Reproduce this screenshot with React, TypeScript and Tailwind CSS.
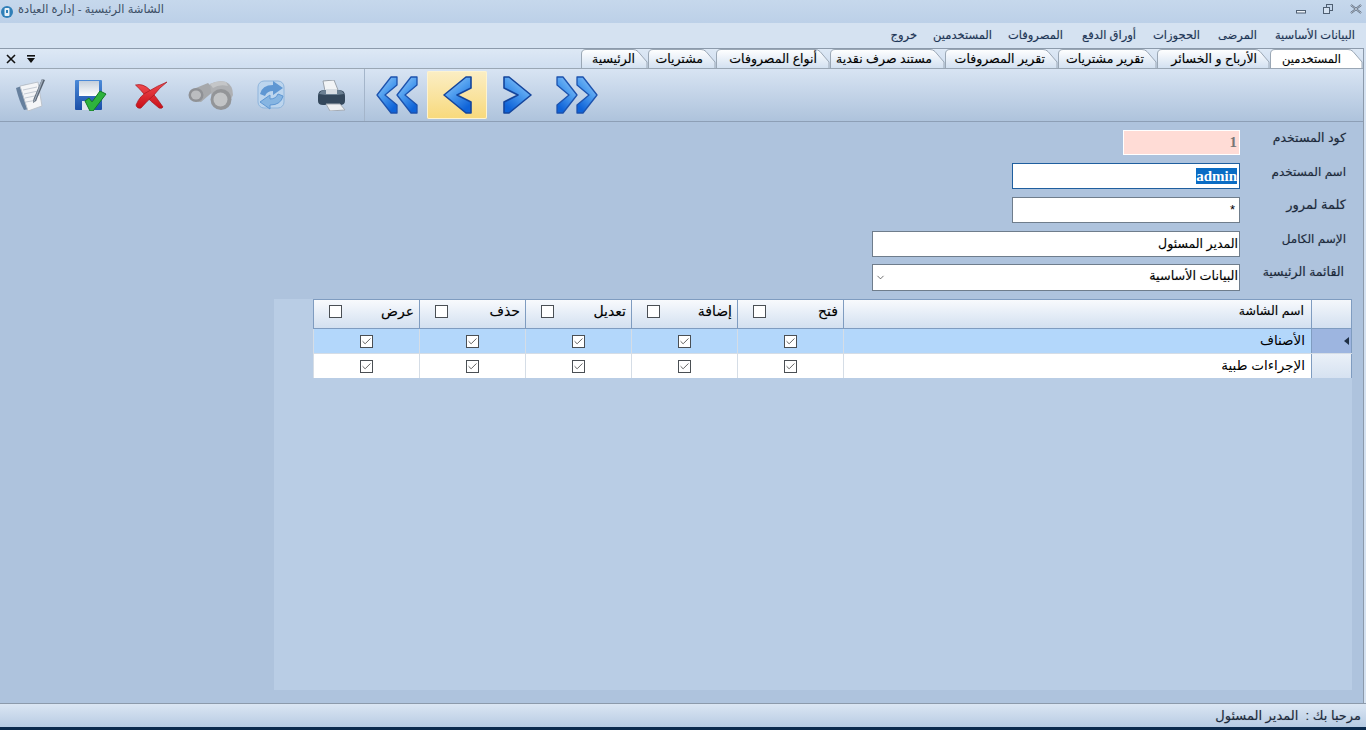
import { Check, ChevronDown } from 'lucide-react';

const FONT = "font-['Liberation_Sans','DejaVu_Sans','Noto_Sans',sans-serif]";
const HEAVY = '[text-shadow:0_0_1px_rgba(0,0,0,0.25)]';

const MENU = [
  { label: 'البيانات الأساسية', w: 'w-[98px]' },
  { label: 'المرضى', w: 'w-[57px]' },
  { label: 'الحجوزات', w: 'w-[64px]' },
  { label: 'أوراق الدفع', w: 'w-[73px]' },
  { label: 'المصروفات', w: 'w-[71px]' },
  { label: 'المستخدمين', w: 'w-[75px]' },
  { label: 'خروج', w: 'w-[40px]' },
];

const TABS = [
  { label: 'المستخدمين', w: 'w-[93px]', width: 93, active: true },
  { label: 'الأرباح و الخسائر', w: 'w-[113px]', width: 113 },
  { label: 'تقرير مشتريات', w: 'w-[99px]', width: 99 },
  { label: 'تقرير المصروفات', w: 'w-[113px]', width: 113 },
  { label: 'مستند صرف نقدية', w: 'w-[115px]', width: 115 },
  { label: 'أنواع المصروفات', w: 'w-[114px]', width: 114 },
  { label: 'مشتريات', w: 'w-[68px]', width: 68 },
  { label: 'الرئيسية', w: 'w-[67px]', width: 67 },
];

const COLUMNS = ['فتح', 'إضافة', 'تعديل', 'حذف', 'عرض'];
const ROWS = ['الأصناف', 'الإجراءات طبية'];
const GRID = 'grid w-fit grid-cols-[41px_468px_repeat(5,106px)]';

function Tab({ label, w, width, active }: { label: string; w: string; width: number; active?: boolean }) {
  const d = `M0.5 20 V6 Q0.5 1.5 5 1.5 H${width - 15} Q${width - 12} 1.5 ${width - 10} 3.5 L${width - 1} 14 V20`;
  return (
    <div className={`relative h-[20px] ${w} shrink-0`}>
      <svg className="absolute inset-0" width={width} height={20}>
        <defs>
          <linearGradient id={`tab-${width}`} x1="0" y1="0" x2="0" y2="1">
            <stop offset="0" stopColor="#ffffff" />
            <stop offset="1" stopColor={active ? '#ffffff' : '#d3e1f1'} />
          </linearGradient>
        </defs>
        <path d={d} fill={`url(#tab-${width})`} stroke="#9aa7b5" />
      </svg>
      <span className={`relative block pt-[2px] leading-[18px] text-black whitespace-nowrap ${HEAVY} ${active ? 'pr-[22px] text-[11.5px]' : 'pr-[13px] text-[12.5px]'}`}>{label}</span>
    </div>
  );
}

function Chevron({ flip, double, id }: { flip?: boolean; double?: boolean; id: string }) {
  const single = 'M22 0 H27 V11 L13 18 L27 25 V36 H22 L0 18 Z';
  const slim = 'M14 0 H20 V8 L8 18 L20 28 V36 H14 L0 18 Z';
  const w = double ? 40 : 27;
  return (
    <svg width={w + 2} height={38} viewBox={`-1 -1 ${w + 2} 38`}>
      <defs>
        <linearGradient id={id} x1="0" y1="0" x2="0.6" y2="1">
          <stop offset="0" stopColor="#a6d2fa" />
          <stop offset="0.5" stopColor="#4f9eef" />
          <stop offset="1" stopColor="#0f63d8" />
        </linearGradient>
      </defs>
      <g transform={flip ? `translate(${w} 0) scale(-1 1)` : undefined}>
        {double ? (
          <>
            <path d={slim} fill={`url(#${id})`} stroke="#1c52ad" strokeWidth="1.3" strokeLinejoin="round" />
            <path d={slim} transform="translate(20 0)" fill={`url(#${id})`} stroke="#1c52ad" strokeWidth="1.3" strokeLinejoin="round" />
          </>
        ) : (
          <path d={single} fill={`url(#${id})`} stroke="#14459c" strokeWidth="1.6" strokeLinejoin="round" />
        )}
      </g>
    </svg>
  );
}

function NotesIcon() {
  return (
    <svg width="30" height="32" viewBox="0 0 30 32">
      <path d="M0 9 L11 5 L18 29 L8 31 Q3 22 0 9 Z" fill="#66809e" />
      <path d="M4 7 L22 3 L26 27 L12 32 Z" fill="#f4f5f7" stroke="#bcc3cc" />
      <path d="M7 11 L21 8 M8 15 L22 12 M9 19 L23 16 M10 23 L21 21" stroke="#c6ccd5" />
      <path d="M26 0 L29 1 L20 22 L17 24 L17.5 20 Z" fill="#56616f" />
      <path d="M26 0 L27.5 0.5 L19 22 L17 24 Z" fill="#9ca8b7" />
    </svg>
  );
}

function SaveIcon() {
  return (
    <svg width="32" height="32" viewBox="0 0 32 32">
      <defs>
        <linearGradient id="floppy" x1="0" y1="0" x2="0" y2="1">
          <stop offset="0" stopColor="#4b8ad8" />
          <stop offset="1" stopColor="#1b4fa8" />
        </linearGradient>
        <linearGradient id="floppy-label" x1="0" y1="0" x2="0" y2="1">
          <stop offset="0" stopColor="#c4cfdc" />
          <stop offset="1" stopColor="#ffffff" />
        </linearGradient>
      </defs>
      <rect x="0" y="1" width="27" height="30" rx="1" fill="url(#floppy)" />
      <rect x="4" y="2" width="20" height="15" fill="url(#floppy-label)" />
      <rect x="7" y="22" width="12" height="9" fill="#dfe6ef" />
      <path d="M10 22 L14 19 L17 23 L25 12 L31 15 L18 32 L15 32 Z" fill="#2eb33c" stroke="#137a24" />
    </svg>
  );
}

function DeleteIcon() {
  return (
    <svg width="33" height="29" viewBox="0 0 33 29">
      <defs>
        <linearGradient id="cross" x1="0" y1="0" x2="0" y2="1">
          <stop offset="0" stopColor="#f04a4f" />
          <stop offset="1" stopColor="#c90f18" />
        </linearGradient>
      </defs>
      <path d="M0.5 4 Q8 2 15 9 Q22 17 28 26 Q27 28 24 27 Q15 20 9 13 Q5 8 0.5 4 Z" fill="url(#cross)" stroke="#a3161c" strokeWidth="0.7" />
      <path d="M1 24 Q5 14 14 10 Q22 5 32 1 Q24 7 19 14 Q12 20 6 27 Q2 28 1 24 Z" fill="url(#cross)" stroke="#a3161c" strokeWidth="0.7" />
    </svg>
  );
}

function BinocularsIcon() {
  return (
    <svg width="46" height="29" viewBox="0 0 46 29">
      <path d="M3 9 L20 2 L27 9 L13 21 L6 20 Z" fill="#a6a8ab" />
      <path d="M22 3 Q30 -1 38 1 Q45 4 45 14 L40 24 L24 18 Z" fill="#aeb0b3" />
      <path d="M22 3 Q30 -1 38 1 L40 5 Q31 3 25 7 Z" fill="#c4c6c8" />
      <ellipse cx="8" cy="14" rx="7.5" ry="7" fill="#8f9195" />
      <ellipse cx="8" cy="14" rx="5" ry="4.5" fill="#bbbdc0" />
      <circle cx="33" cy="18.5" r="10.5" fill="#939598" />
      <circle cx="32.5" cy="18.5" r="7" fill="#c2c4c6" />
    </svg>
  );
}

function RefreshIcon() {
  return (
    <svg width="29" height="30" viewBox="0 0 29 30">
      <rect x="1" y="1" width="26" height="27" rx="6" fill="#bcd5ee" stroke="#8fb5dc" />
      <path d="M3 14 Q5 5 16 5 L16 1 L26 8 L16 15 L16 11 Q10 11 8 16 Z" fill="#5f97d3" />
      <path d="M26 16 Q24 25 13 25 L13 29 L3 22 L13 15 L13 19 Q19 19 21 14 Z" fill="#86b5e2" stroke="#5f97d3" />
    </svg>
  );
}

function PrinterIcon() {
  return (
    <svg width="29" height="31" viewBox="0 0 29 31">
      <path d="M6 1 L17 0 L21 10 L8 11 Z" fill="#f2f4f6" stroke="#9aa2ab" />
      <path d="M1 16 Q1 10 7 10 L22 10 Q28 10 28 16 L28 21 Q28 25 23 25 L6 25 Q1 25 1 21 Z" fill="#34485c" />
      <path d="M2 14 Q4 10 8 10 L22 10 Q26 11 27 14 L20 15 H9 Z" fill="#6b8093" />
      <rect x="9" y="9" width="11" height="5" fill="#d7dde3" />
      <path d="M9 24 L23 24 L28 30 L13 31 Z" fill="#eef0f2" stroke="#a5acb4" />
    </svg>
  );
}

function ToolButton({ children, active }: { children: React.ReactNode; active?: boolean }) {
  return (
    <div className={`w-[60px] h-[48px] flex items-center justify-center rounded-[2px] ${active ? 'bg-gradient-to-b from-[#fbeec4] to-[#f8d97a] shadow-[inset_0_0_0_1px_#fdf3d0]' : ''}`}>
      {children}
    </div>
  );
}

function Box({ checked }: { checked?: boolean }) {
  return (
    <span className="w-[13px] h-[13px] bg-white border border-[#4a4f54] flex items-center justify-center shrink-0">
      {checked && <Check size={11} strokeWidth={2} className="text-[#555]" />}
    </span>
  );
}

export default function App() {
  return (
    <div className={`${FONT} w-full h-screen overflow-hidden flex flex-col bg-[#d5e2f1]`}>
      {/* title bar */}
      <div className="h-[23px] shrink-0 flex items-center justify-between bg-gradient-to-b from-[#c6d8ec] to-[#bcd0e8]">
        <div className="flex items-center gap-[5px] pl-[1px]">
          <svg width="12" height="14" viewBox="0 0 12 14">
            <circle cx="6" cy="7" r="6" fill="#2f7fb8" />
            <rect x="3.5" y="3" width="5" height="8" rx="1" fill="#e6f1f8" />
            <rect x="5" y="5" width="2" height="3" fill="#2f7fb8" />
          </svg>
          <span dir="rtl" className="text-[11.5px] text-[#3c4f66] leading-none pb-[3px]">الشاشة الرئيسية - إدارة العيادة</span>
        </div>
        <div className="flex items-center gap-[17px] pr-[4px] pb-[5px]">
          <svg width="10" height="10" viewBox="0 0 10 10"><rect x="0.5" y="6.5" width="9" height="2.5" fill="#eef3f9" stroke="#4f5f72" /></svg>
          <svg width="10" height="10" viewBox="0 0 10 10"><rect x="3.5" y="0.5" width="6" height="6" fill="none" stroke="#4f5f72" /><rect x="0.5" y="3.5" width="6" height="6" fill="#d5e2f1" stroke="#4f5f72" /></svg>
          <svg width="12" height="10" viewBox="0 0 12 10"><path d="M1 1 L11 9 M11 1 L1 9" stroke="#4f5f72" strokeWidth="2" /><path d="M1 1 L11 9 M11 1 L1 9" stroke="#e8eef6" strokeWidth="0.7" /></svg>
        </div>
      </div>

      {/* menu */}
      <div dir="rtl" className={`h-[25px] shrink-0 flex items-center pr-[11px] bg-[#d5e2f1] text-[11.5px] text-[#1c3558] ${HEAVY}`}>
        {MENU.map((m) => (
          <span key={m.label} className={`${m.w} whitespace-nowrap`}>{m.label}</span>
        ))}
      </div>

      {/* mdi frame */}
      <div className="flex-1 min-h-0 flex flex-col mr-[2px] border-r border-[#8c9aab]">
        <div dir="rtl" className="h-[20px] shrink-0 flex items-end border-t border-[#8c9aab] bg-gradient-to-b from-[#dde8f5] to-[#cfdef0]">
          <div className="flex -mt-px">
            {TABS.map((t) => (
              <Tab key={t.label} {...t} />
            ))}
          </div>
          <div className="mr-auto self-center flex items-center gap-[10px] pl-[6px] flex-row-reverse">
            <svg width="10" height="10" viewBox="0 0 10 10"><path d="M1 1 L9 9 M9 1 L1 9" stroke="#111" strokeWidth="1.6" /></svg>
            <svg width="10" height="8" viewBox="0 0 10 8"><rect x="1" y="0" width="8" height="1.6" fill="#111" /><path d="M1 3 H9 L5 8 Z" fill="#111" /></svg>
          </div>
        </div>

        <div className="h-[54px] shrink-0 flex items-center pl-[1px] border-t border-b border-t-[#9aa7b5] border-b-[#8d9fb6] bg-gradient-to-b from-[#d8e4f3] to-[#aec3dc]">
          <ToolButton><NotesIcon /></ToolButton>
          <ToolButton><SaveIcon /></ToolButton>
          <ToolButton><DeleteIcon /></ToolButton>
          <ToolButton><BinocularsIcon /></ToolButton>
          <ToolButton><RefreshIcon /></ToolButton>
          <ToolButton><PrinterIcon /></ToolButton>
          <div className="w-px h-full ml-[3px] mr-[2px] bg-[#a4b5ca]" />
          <ToolButton><Chevron double id="ch-first" /></ToolButton>
          <ToolButton active><Chevron id="ch-prev" /></ToolButton>
          <ToolButton><Chevron flip id="ch-next" /></ToolButton>
          <ToolButton><Chevron flip double id="ch-last" /></ToolButton>
        </div>

        {/* form */}
        <div dir="rtl" className="flex-1 min-h-0 flex flex-col bg-[#aec3dd] pr-[11px] pb-[13px] text-black">
          <div className="flex flex-col pt-[8px] pr-[6px] gap-2">
            <div className="flex items-start">
              <label className={`w-[106px] shrink-0 text-[12.5px] leading-[16px] text-[#1c2a3c] ${HEAVY}`}>كود المستخدم</label>
              <div className="w-[117px] h-[25px] border border-white bg-[#ffdcd6] px-[2px] text-[15px] font-bold text-[#777] font-['Liberation_Serif',serif] leading-[23px]">1</div>
            </div>
            <div className="flex items-start">
              <label className={`w-[106px] shrink-0 text-[12px] leading-[16px] text-[#1c2a3c] pt-[1px] ${HEAVY}`}>اسم المستخدم</label>
              <div className="w-[228px] h-[26px] border border-[#1f5f9f] bg-white px-[2px] flex items-center">
                <span className="bg-[#0a6cc4] text-white text-[15px] font-bold font-['Liberation_Serif',serif] leading-[16px]" dir="ltr">admin</span>
              </div>
            </div>
            <div className="flex items-start">
              <label className={`w-[106px] shrink-0 text-[13px] leading-[16px] text-[#1c2a3c] ${HEAVY}`}>كلمة لمرور</label>
              <div className="w-[228px] h-[26px] border border-[#6f7d8c] bg-white px-[4px] text-[13px] leading-[24px]">*</div>
            </div>
            <div className="flex items-start">
              <label className={`w-[106px] shrink-0 text-[12px] leading-[16px] text-[#1c2a3c] ${HEAVY}`}>الإسم الكامل</label>
              <div className={`w-[368px] h-[26px] border border-[#6f7d8c] bg-white px-[1px] text-[12.5px] leading-[24px] ${HEAVY}`}>المدير المسئول</div>
            </div>
            <div className="flex items-start -mt-px">
              <label className={`w-[106px] shrink-0 pr-[2px] text-[12.5px] leading-[16px] text-[#1c2a3c] ${HEAVY}`}>القائمة الرئيسية</label>
              <div className="w-[368px] h-[27px] border border-[#6f7d8c] bg-white pr-[1px] pl-[2px] flex items-center justify-between text-[12.75px]">
                <span className={`leading-[20px] pb-[4px] ${HEAVY}`}>البيانات الأساسية</span>
                <ChevronDown size={11} strokeWidth={1.5} className="text-[#333]" />
              </div>
            </div>
          </div>

          {/* grid */}
          <div className="flex-1 mt-[8px] ml-[274px] bg-[#b9cde5]">
            <div className={`${GRID} h-[29px] border-t border-[#7f9cc0]`}>
              <div className="border-l border-r border-[#7f9cc0] bg-gradient-to-b from-[#f4f7fb] to-[#d3e0f0]" />
              <div className={`border-l border-[#7f9cc0] bg-gradient-to-b from-[#f8fafd] to-[#d3e0f0] flex items-center pr-[7px] pb-[5px] text-[12.5px] ${HEAVY}`}>اسم الشاشة</div>
              {COLUMNS.map((c) => (
                <div key={c} className="border-l border-[#7f9cc0] bg-gradient-to-b from-[#f8fafd] to-[#d3e0f0] flex items-center justify-between pr-[5px] pl-[15px] pb-[5px] text-[14px]">
                  <span className={HEAVY}>{c}</span>
                  <Box />
                </div>
              ))}
            </div>
            {ROWS.map((r, i) => (
              <div key={r} className={`${GRID} h-[25px] border-t ${i === 0 ? 'border-[#7f9cc0] bg-[#b3d7fb]' : 'border-[#d5dde6] bg-white'}`}>
                <div className={`border-l border-r border-[#7f9cc0] flex items-center pr-[2px] ${i === 0 ? 'bg-[#9db5e0]' : 'bg-gradient-to-b from-[#eaf0f8] to-[#d6e2f1]'}`}>
                  {i === 0 && <svg width="5" height="8" viewBox="0 0 5 8"><path d="M0 4 L5 0 V8 Z" fill="#1f2f45" /></svg>}
                </div>
                <div className="border-l border-[#d5dde6] pr-[6px] text-[13.5px] leading-[23px]">{r}</div>
                {COLUMNS.map((c) => (
                  <div key={c} className="border-l border-[#d5dde6] flex items-center justify-center">
                    <Box checked />
                  </div>
                ))}
              </div>
            ))}
          </div>
        </div>
      </div>

      {/* status */}
      <div dir="rtl" className={`h-[24px] shrink-0 flex items-center pr-[5px] border-t border-[#8c9aab] bg-gradient-to-b from-[#dbe6f3] to-[#b7cbe3] text-[13px] text-[#1c2a3c] ${HEAVY}`}>
        <span className="whitespace-pre">مرحبا بك :  المدير المسئول</span>
      </div>
      <div className="h-[3px] shrink-0 bg-[#0b2a4d]" />
    </div>
  );
}
